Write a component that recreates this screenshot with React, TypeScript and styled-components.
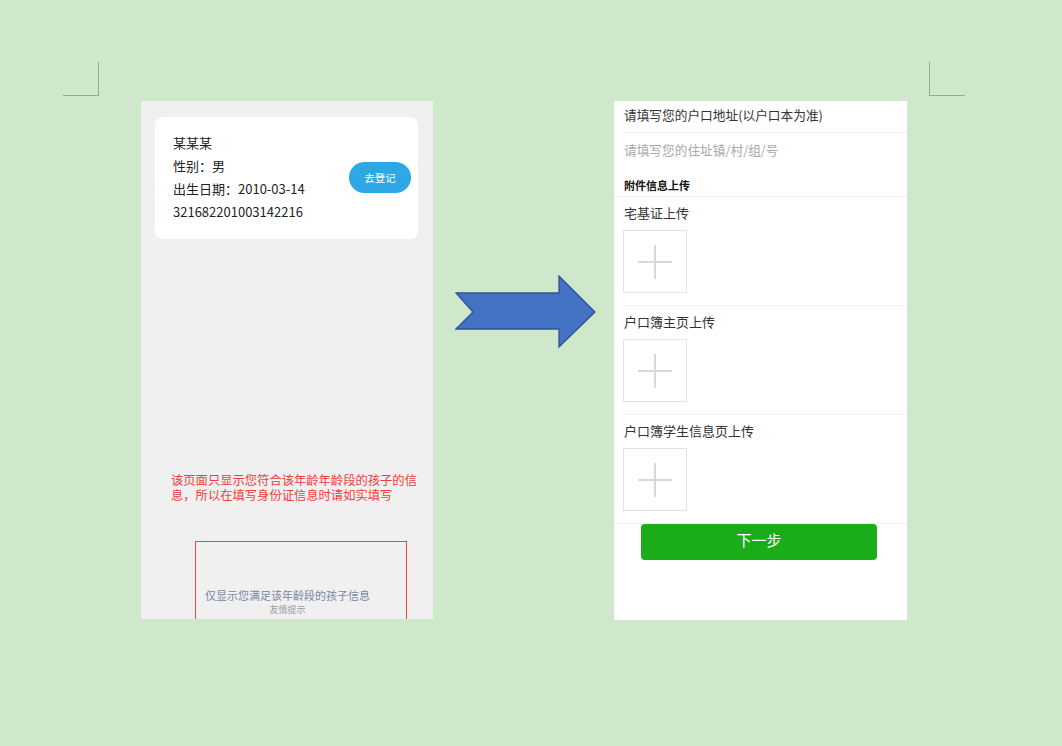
import React from "react";
import styled, { createGlobalStyle } from "styled-components";

const Global = createGlobalStyle`
  html, body { margin: 0; padding: 0; }
  body {
    background: #cfe8cc;
    font-family: "Noto Sans CJK SC", "Noto Sans", sans-serif;
  }
`;

const Page = styled.div`
  position: relative;
  width: 1062px;
  height: 746px;
  box-sizing: border-box;
  padding: 101px 0 0 141px;
  display: flex;
  align-items: flex-start;
  background: #cfe8cc;
  overflow: hidden;
`;

const CropMark = styled.div<{ $side: "left" | "right" }>`
  position: absolute;
  top: 62px;
  left: ${(p) => (p.$side === "left" ? "63px" : "929px")};
  width: 35px;
  height: 33px;
  border-bottom: 1px solid #98a898;
  ${(p) =>
    p.$side === "left"
      ? "border-right: 1px solid #98a898;"
      : "border-left: 1px solid #98a898;"}
`;

const LeftPanel = styled.div`
  width: 292px;
  height: 518px;
  background: #f0f0f0;
  overflow: hidden;
  box-sizing: border-box;
  padding: 16px 15px 0 14px;
`;

const Card = styled.div`
  height: 122px;
  box-sizing: border-box;
  background: #fff;
  border-radius: 8px;
  padding: 14px 7px 16px 18px;
  display: flex;
  align-items: center;
  justify-content: space-between;
`;

const InfoList = styled.div`
  display: flex;
  flex-direction: column;
`;

const InfoLine = styled.div`
  font-size: 13px;
  line-height: 23px;
  color: #222;
  white-space: nowrap;
`;

const RegisterButton = styled.button`
  width: 62px;
  height: 31px;
  border: none;
  border-radius: 16px;
  background: #2ea8e4;
  color: #fff;
  font-family: "Noto Sans CJK SC", sans-serif;
  font-size: 10.5px;
  padding: 0;
  margin-top: 1px;
`;

const Notice = styled.p`
  margin: 235px 0 0 16px;
  width: 256px;
  font-family: "Liberation Serif", "Noto Sans CJK SC", serif;
  font-size: 12.3px;
  line-height: 14.5px;
  color: #f03c3c;
`;

const TipBox = styled.div`
  margin: 38px 0 0 40px;
  width: 212px;
  height: 100px;
  box-sizing: border-box;
  border: 1px solid #e84848;
  padding: 39px 0 0 9px;
`;

const TipInner = styled.div`
  display: inline-flex;
  flex-direction: column;
  align-items: center;
`;

const TipText = styled.div`
  font-size: 11px;
  line-height: 14px;
  color: #7a86a6;
  white-space: nowrap;
`;

const TipCaption = styled.div`
  margin-top: 2px;
  font-size: 9px;
  line-height: 12px;
  color: #9a9a9a;
`;

const ArrowWrap = styled.svg`
  margin: 174px 0 0 22px;
  flex: none;
`;

const RightPanel = styled.div`
  margin-left: 17px;
  width: 293px;
  height: 519px;
  background: #fff;
  overflow: hidden;
  display: flex;
  flex-direction: column;
`;

const FieldRow = styled.div<{ $muted?: boolean; $pt: number; $pb: number }>`
  margin-left: 9px;
  padding: ${(p) => p.$pt}px 0 ${(p) => p.$pb}px 1px;
  font-size: 12.7px;
  line-height: 20px;
  color: ${(p) => (p.$muted ? "#a8a8a8" : "#333")};
  white-space: nowrap;
`;

const Divider = styled.div<{ $inset?: boolean }>`
  height: 1px;
  background: #f0f0f0;
  margin-left: ${(p) => (p.$inset ? "9px" : "0")};
`;

const SectionTitle = styled.div`
  padding: 7px 0 3px 10px;
  font-size: 11px;
  line-height: 16px;
  font-weight: 700;
  color: #111;
`;

const UploadSection = styled.div`
  padding: 6px 0 12px 9px;
  display: flex;
  flex-direction: column;
  gap: 7px;
`;

const UploadLabel = styled.div`
  font-size: 13px;
  line-height: 20px;
  color: #333;
  padding-left: 1px;
`;

const UploadBox = styled.div`
  width: 64px;
  height: 63px;
  box-sizing: border-box;
  border: 1px solid #e3e3e3;
  display: flex;
  align-items: center;
  justify-content: center;
`;

const NextButton = styled.button`
  align-self: center;
  margin-left: -3px;
  width: 236px;
  height: 36px;
  border: none;
  border-radius: 4px;
  background: #1aad19;
  color: #fff;
  font-family: "Noto Sans CJK SC", sans-serif;
  font-size: 15px;
  line-height: 32px;
  padding: 0 0 4px;
`;

const Plus = () => (
  <svg width="34" height="34" viewBox="0 0 34 34">
    <path d="M0 17H34M17 0V34" stroke="#d8d8d8" strokeWidth="2" fill="none" />
  </svg>
);

const uploads = ["宅基证上传", "户口簿主页上传", "户口簿学生信息页上传"];

export default function App() {
  return (
    <>
      <Global />
      <Page>
        <CropMark $side="left" />
        <CropMark $side="right" />
        <LeftPanel>
          <Card>
            <InfoList>
              <InfoLine>某某某</InfoLine>
              <InfoLine>性别：男</InfoLine>
              <InfoLine>出生日期：2010-03-14</InfoLine>
              <InfoLine>321682201003142216</InfoLine>
            </InfoList>
            <RegisterButton>去登记</RegisterButton>
          </Card>
          <Notice>
            该页面只显示您符合该年龄年龄段的孩子的信息，所以在填写身份证信息时请如实填写
          </Notice>
          <TipBox>
            <TipInner>
              <TipText>仅显示您满足该年龄段的孩子信息</TipText>
              <TipCaption>友情提示</TipCaption>
            </TipInner>
          </TipBox>
        </LeftPanel>
        <ArrowWrap width="142" height="74" viewBox="0 0 142 74">
          <polygon
            points="1,18 104,18 104,1 140,37 104,72 104,54 1,54 18,37"
            fill="#4472c4"
            stroke="#2f528f"
            strokeWidth="1.3"
            strokeLinejoin="miter"
          />
        </ArrowWrap>
        <RightPanel>
          <FieldRow $pt={4} $pb={7}>请填写您的户口地址(以户口本为准)</FieldRow>
          <Divider $inset />
          <FieldRow $muted $pt={7} $pb={10}>请填写您的住址镇/村/组/号</FieldRow>
          <SectionTitle>附件信息上传</SectionTitle>
          <Divider />
          {uploads.map((label, i) => (
            <React.Fragment key={label}>
              <UploadSection>
                <UploadLabel>{label}</UploadLabel>
                <UploadBox>
                  <Plus />
                </UploadBox>
              </UploadSection>
              <Divider $inset={i < uploads.length - 1} />
            </React.Fragment>
          ))}
          <NextButton>下一步</NextButton>
        </RightPanel>
      </Page>
    </>
  );
}
